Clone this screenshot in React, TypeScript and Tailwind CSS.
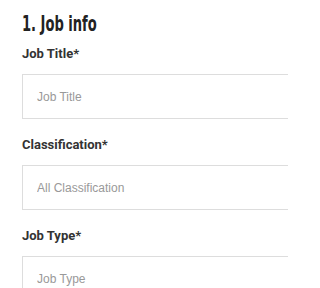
import React from 'react';

const fields = [
  { label: 'Job Title', placeholder: 'Job Title' },
  { label: 'Classification', placeholder: 'All Classification' },
  { label: 'Job Type', placeholder: 'Job Type' },
];

function Field({ label, placeholder }: { label: string; placeholder: string }) {
  return (
    <div className="flex flex-col">
      <label className="mb-[12px] text-[13px] leading-[16px] font-bold text-[#333]">
        {label}*
      </label>
      <input
        type="text"
        placeholder={placeholder}
        className="h-[45px] w-[320px] border border-[#dddddd] bg-white px-[14px] text-[12px] text-[#333] outline-none placeholder:text-[#999]"
        style={{ fontFamily: '"Liberation Sans", Arial, sans-serif' }}
      />
    </div>
  );
}

export default function App() {
  return (
    <div
      className="h-[288px] w-[288px] overflow-hidden bg-white pl-[22px] pt-[10px]"
      style={{ fontFamily: 'Roboto, "Liberation Sans", sans-serif' }}
    >
      {/* condensed heading: squeeze a condensed face to mimic Oswald */}
      <h2
        className="inline-block origin-left scale-x-[0.66] text-[22px] leading-[28px] font-bold text-[#222]"
        style={{ fontFamily: '"DejaVu Sans Condensed", "DejaVu Sans", sans-serif' }}
      >
        1. Job info
      </h2>
      <div className="mt-[8px] flex flex-col gap-[18px]">
        {fields.map((f) => (
          <Field key={f.label} label={f.label} placeholder={f.placeholder} />
        ))}
      </div>
    </div>
  );
}
